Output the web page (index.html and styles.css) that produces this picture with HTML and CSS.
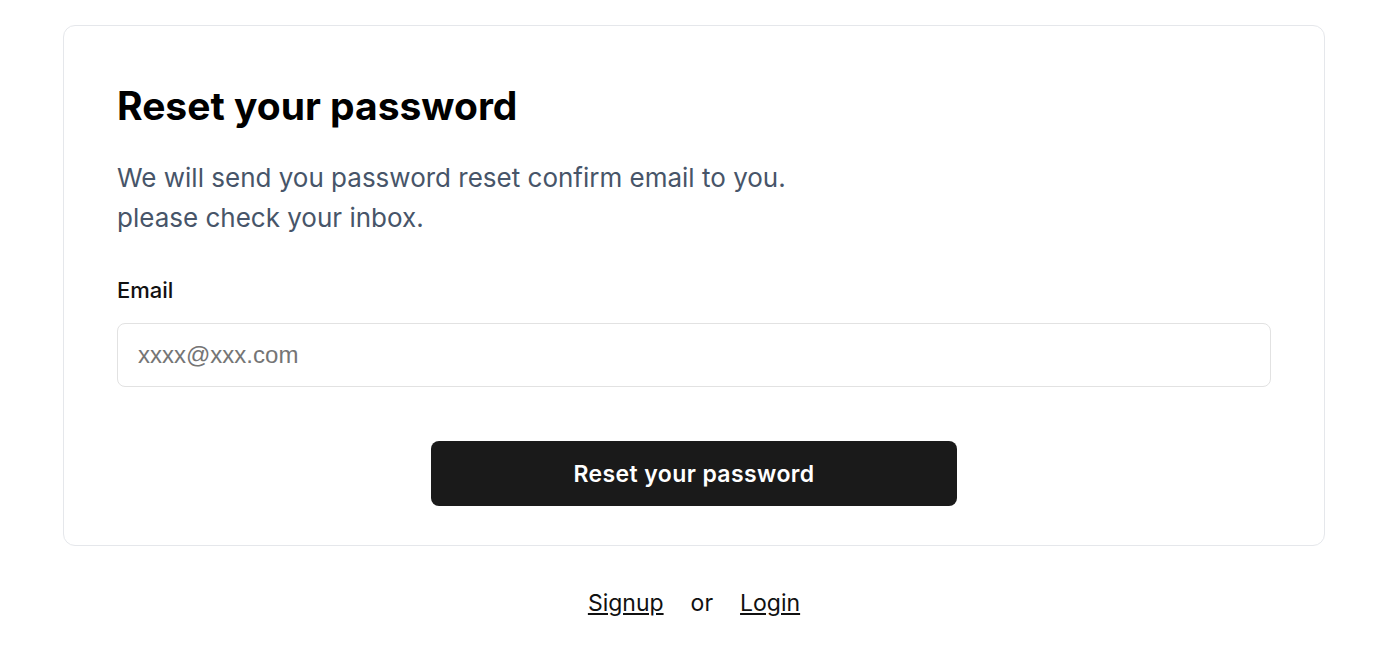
FILE: index.html
```html
<!DOCTYPE html>
<html lang="en">
<head>
  <meta charset="UTF-8">
  <meta name="viewport" content="width=device-width, initial-scale=1.0">
  <title>Reset your password</title>
  <link rel="stylesheet" href="styles.css">
</head>
<body>
  <div class="page">
    <form class="card" onsubmit="return false;">
      <h1>Reset your password</h1>
      <p class="lead">
        We will send you password reset confirm email to you.<br>
        please check your inbox.
      </p>

      <label class="field-label" for="email">Email</label>
      <input class="text-input" type="email" id="email" placeholder="xxxx@xxx.com">

      <div class="actions">
        <button type="submit" class="primary-btn">Reset your password</button>
      </div>
    </form>

    <div class="alt-links">
      <a href="#">Signup</a>
      <span>or</span>
      <a href="#">Login</a>
    </div>
  </div>
</body>
</html>
```

FILE: styles.css
```css
/* Reset basic styles */
* {
  margin: 0;
  padding: 0;
  box-sizing: border-box;
}

body {
  font-family: 'Inter', sans-serif;
  background-color: #ffffff;
  color: #000;
}

.page {
  width: 1388px;
  padding: 25px 63px 0;
}

.card {
  display: flex;
  flex-direction: column;
  border: 1px solid #e5e7eb;
  border-radius: 12px;
  padding: 58px 53px 39px;
}

h1 {
  font-size: 39px;
  line-height: 44px;
  font-weight: 700;
  color: #000;
}

.lead {
  margin-top: 30px;
  font-size: 26px;
  line-height: 40px;
  color: #475569;
}

.field-label {
  margin-top: 38px;
  font-size: 22px;
  line-height: 28px;
  font-weight: 500;
  color: #111;
}

.text-input {
  margin-top: 19px;
  height: 64px;
  padding: 0 20px;
  border: 1px solid #e2e2e2;
  border-radius: 8px;
  font-family: 'Liberation Sans', Arial, sans-serif;
  font-size: 24px;
  color: #111;
  outline: none;
}

.text-input::placeholder {
  color: #757575;
}

.actions {
  display: flex;
  justify-content: center;
  margin-top: 54px;
}

.primary-btn {
  width: 526px;
  height: 65px;
  background: #1a1a1a;
  color: #fff;
  border: none;
  border-radius: 8px;
  font-family: 'Inter', sans-serif;
  font-size: 23px;
  font-weight: 600;
  letter-spacing: 0.4px;
  cursor: pointer;
}

.alt-links {
  display: flex;
  justify-content: center;
  gap: 27px;
  margin-top: 41px;
  font-size: 23px;
  line-height: 32px;
  color: #111;
}

.alt-links a {
  color: #111;
  text-decoration: underline;
}
```
